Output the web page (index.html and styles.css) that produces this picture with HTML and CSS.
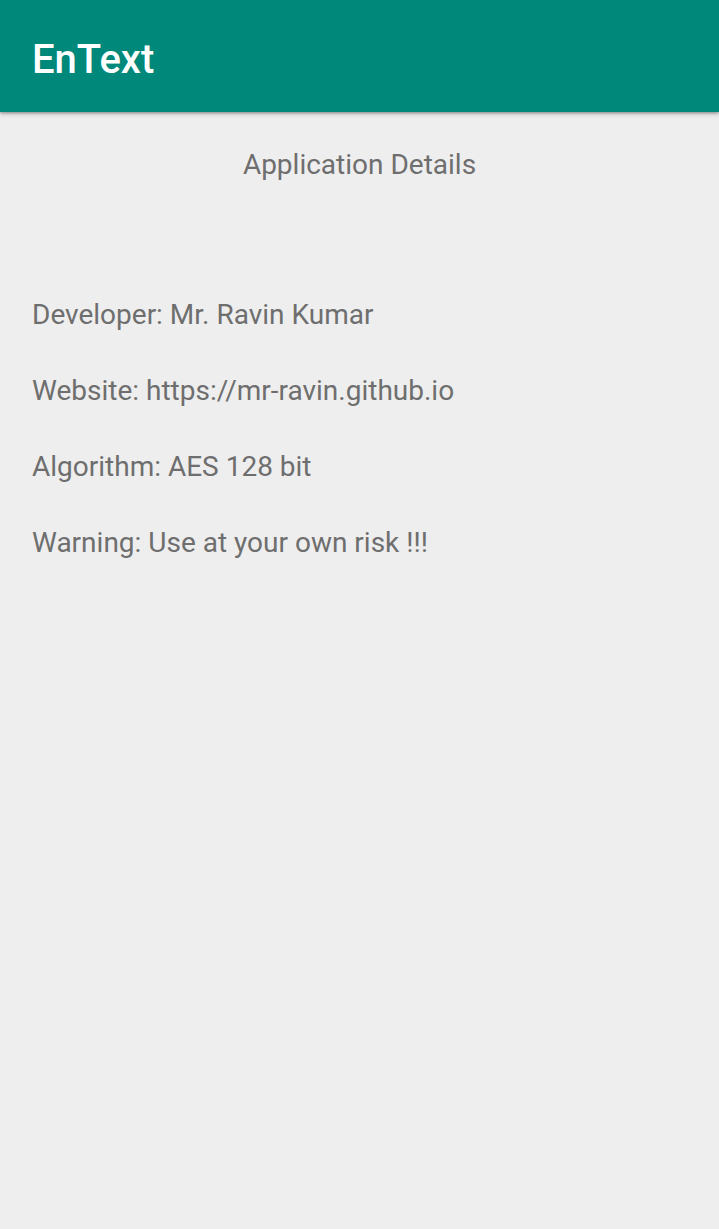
FILE: index.html
```html
<!DOCTYPE html>
<html>
<head>
<meta charset="utf-8">
<link rel="stylesheet" href="styles.css">
</head>
<body>
<header class="toolbar">
  <h1 class="title">EnText</h1>
</header>
<main class="content">
  <h2 class="heading">Application Details</h2>
  <ul class="details">
    <li>Developer: Mr. Ravin Kumar</li>
    <li>Website: https://mr-ravin.github.io</li>
    <li>Algorithm: AES 128 bit</li>
    <li>Warning: Use at your own risk !!!</li>
  </ul>
</main>
</body>
</html>
```

FILE: styles.css
```css
html, body {
  margin: 0;
  padding: 0;
}
body {
  background: #eeeeee;
  font-family: Roboto, "Noto Sans", sans-serif;
  width: 719px;
  height: 1229px;
  overflow: hidden;
}
.toolbar {
  height: 112px;
  background: #00887a;
  box-shadow: 0 2px 4px rgba(0,0,0,0.25), 0 1px 2px rgba(0,0,0,0.2);
  display: flex;
  align-items: center;
  padding: 0 32px;
  position: relative;
  z-index: 1;
}
.title {
  margin: 0;
  color: #ffffff;
  font-size: 40px;
  font-weight: 500;
  line-height: 48px;
  padding-top: 7px;
}
.content {
  color: #6e6e6e;
  font-size: 28px;
  padding: 0 32px;
}
.heading {
  margin: 0;
  padding-top: 23px;
  text-align: center;
  font-weight: 400;
  font-size: 28px;
  line-height: 60px;
}
.details {
  list-style: none;
  margin: 0;
  padding: 0;
  padding-top: 104px;
  display: flex;
  flex-direction: column;
  gap: 44px;
}
.details li {
  line-height: 32px;
}
```
